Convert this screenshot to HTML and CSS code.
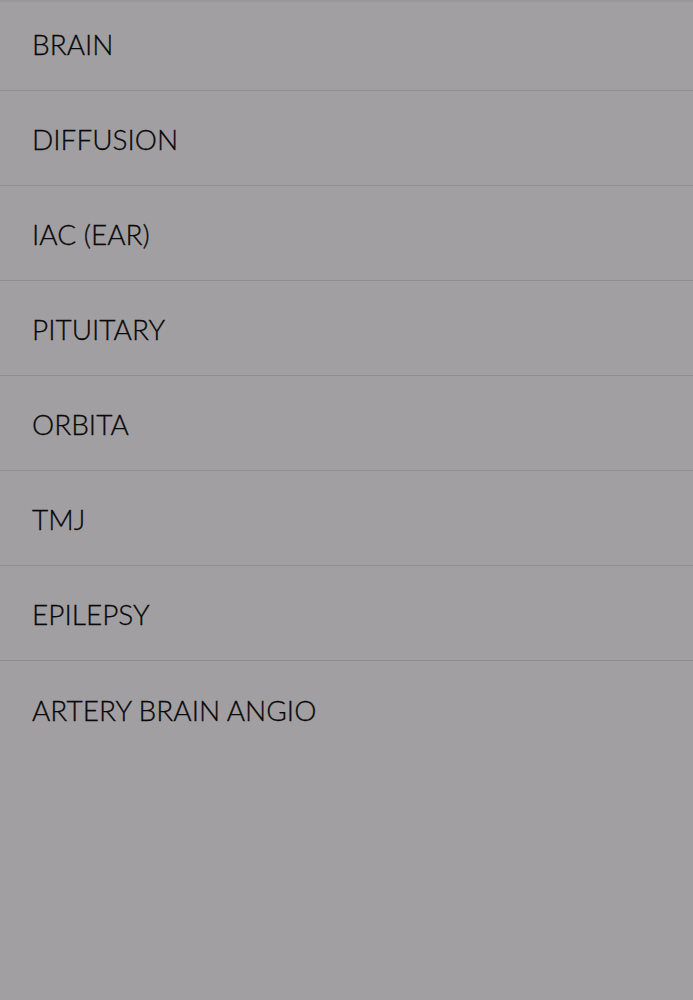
FILE: index.html
```html
<!DOCTYPE html>
<html lang="en">
<head>
  <meta charset="UTF-8" />
  <meta name="viewport" content="width=device-width, initial-scale=1.0" />
  <title>Brain</title>
  <link rel="stylesheet" href="styles.css">
</head>
<body>
  <ul class="menu">
    <li class="item">BRAIN</li>
    <li class="item">DIFFUSION</li>
    <li class="item">IAC (EAR)</li>
    <li class="item">PITUITARY</li>
    <li class="item">ORBITA</li>
    <li class="item">TMJ</li>
    <li class="item">EPILEPSY</li>
    <li class="item">ARTERY BRAIN ANGIO</li>
  </ul>
</body>
</html>
```

FILE: styles.css
```css
:root {
  --bg: #a19fa2;
  --line: #8f8d90;
  --text: #080808;
}
html, body {
  height: 100%;
}
body {
  margin: 0;
  background: linear-gradient(#959396, var(--bg) 3px) var(--bg);
  font-family: Lato, "Liberation Sans", sans-serif;
}
.menu {
  list-style: none;
  margin: 0;
  padding: 0;
}
.item {
  height: 95px;
  display: flex;
  align-items: center;
  padding: 2px 0 0 32px;
  box-sizing: border-box;
  font-size: 28px;
  font-weight: 300;
  color: var(--text);
  -webkit-text-stroke: 0.3px var(--text);
  border-bottom: 1px solid var(--line);
}
.item:first-child {
  height: 91px;
  padding: 0 0 3px 32px;
}
.item:last-child {
  border-bottom: none;
}
```
